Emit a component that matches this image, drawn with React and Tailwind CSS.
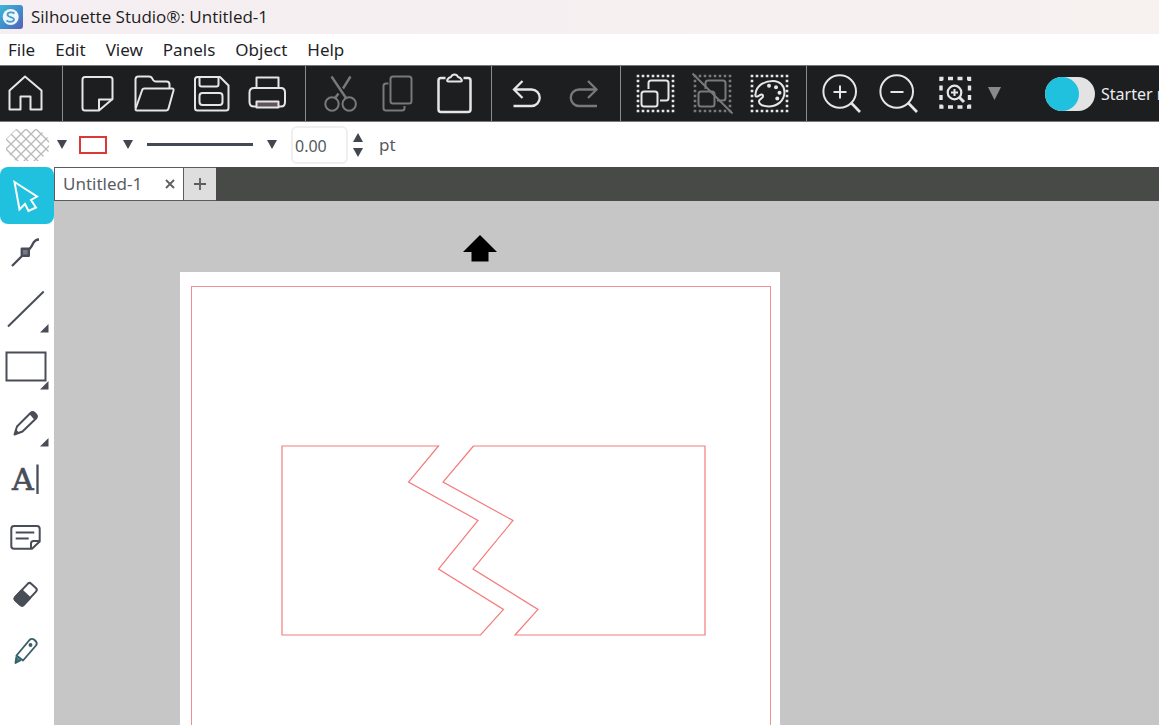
import React from "react";

const menus = ["File", "Edit", "View", "Panels", "Object", "Help"];

function ToolIcon({ children, dim }) {
  return (
    <svg
      viewBox="0 0 43 43"
      className={dim ? "size-[43px] text-[#77797a]" : "size-[43px] text-[#e6e6e6]"}
      fill="none"
      stroke="currentColor"
      strokeWidth="2"
      strokeLinejoin="round"
      aria-hidden="true"
    >
      {children}
    </svg>
  );
}

function ToolButton({ label, dim, children }) {
  return (
    <button type="button" aria-label={label} disabled={dim} className="flex h-full w-[57px] shrink-0 items-center justify-center">
      <ToolIcon dim={dim}>{children}</ToolIcon>
    </button>
  );
}

function ToolGroup({ children }) {
  return <div className="flex h-full shrink-0 border-l border-[#8b8c8d] pr-2 pl-[6px]">{children}</div>;
}

function DottedBox() {
  return <rect x="4" y="4" width="35" height="35" strokeWidth="2.6" strokeDasharray="2.6 2.4" strokeDashoffset="1.3" strokeLinejoin="miter" />;
}

function GroupShapes() {
  return (
    <>
      <rect x="7.5" y="19.5" width="16" height="15" rx="2.5" />
      <path d="M14.5 17V11Q14.5 8.5 17 8.5H32Q34.5 8.5 34.5 11V26Q34.5 28.5 32 28.5H26" />
    </>
  );
}

function Magnifier({ children }) {
  return (
    <>
      <circle cx="19.7" cy="19.5" r="16.3" />
      <path d="M31.3 31L40 40" strokeWidth="2.6" />
      {children}
    </>
  );
}

function Triangle({ className, up }) {
  return (
    <svg viewBox="0 0 10 9" preserveAspectRatio="none" className={className} fill="currentColor" aria-hidden="true">
      <path d={up ? "M5 0L10 9H0Z" : "M0 0H10L5 9Z"} />
    </svg>
  );
}

function TitleBar() {
  return (
    <header className="flex h-[34px] shrink-0 items-center gap-2 bg-gradient-to-r from-[#f5eef2] to-[#f7f1f0]">
      <svg viewBox="0 0 23 24" className="h-6 w-[23px]" aria-hidden="true">
        <defs>
          <linearGradient id="logo" x1="0" y1="0" x2="1" y2="1">
            <stop offset="0" stopColor="#3fb6d8" />
            <stop offset="0.5" stopColor="#3f8fcb" />
            <stop offset="1" stopColor="#5660b5" />
          </linearGradient>
        </defs>
        <path d="M0 0H20Q23 0 23 3V21Q23 24 20 24H0Z" fill="url(#logo)" />
        <circle cx="10.7" cy="12" r="8" fill="#eef7fc" />
        <path d="M14.5 8.5C12 6.5 7.5 7.2 7.5 9.7C7.5 12.6 14 11.5 14 14.6C14 17 9.5 17.6 6.5 15.4" fill="none" stroke="#4b9bd3" strokeWidth="1.8" />
      </svg>
      <h1 className="font-['Open_Sans','Noto_Sans',sans-serif] text-[17px] leading-6 whitespace-nowrap text-[#1c1c1c]">
        Silhouette Studio®: Untitled-1
      </h1>
    </header>
  );
}

function MenuBar() {
  return (
    <nav className="flex h-[31px] shrink-0 items-center gap-5 bg-white pl-2 text-[17px] leading-6 text-[#1f1f28]">
      {menus.map((m) => (
        <button key={m} type="button">
          {m}
        </button>
      ))}
    </nav>
  );
}

function Toolbar() {
  return (
    <div className="flex h-[57px] shrink-0 items-center overflow-hidden border-y border-[#77787a] bg-[#1d1e20]">
      <button type="button" aria-label="Home" className="mr-[11px] flex h-full w-[51px] shrink-0 items-center justify-center">
        <ToolIcon>
          <path d="M5.5 18.5L21 4.5L37.5 18.5V37.5H26.5V24.5H16.5V37.5H5.5Z" />
        </ToolIcon>
      </button>
      <ToolGroup>
        <ToolButton label="New">
          <path d="M9 5H34Q36.500 5 36.500 7.500V27L23 38.500H9Q6.500 38.500 6.500 36V7.500Q6.500 5 9 5Z" />
          <path d="M23 38.500V27.500H36.500" />
        </ToolButton>
        <ToolButton label="Open">
          <path d="M2.500 36V7.500Q2.500 4.500 5.500 4.500H16Q18.500 4.500 19.500 7Q20.500 9.500 23 9.500H33.500Q36.500 9.500 36.500 12.500V16" />
          <path d="M11.500 16.500H39Q41 16.500 40.500 18.500L35.500 36.500Q35 38.500 33 38.500H4Q2 38.500 2.700 36.500L9 18.500Q9.500 16.500 11.500 16.500Z" />
        </ToolButton>
        <ToolButton label="Save">
          <path d="M7.500 5H30L38.500 13.500V36Q38.500 38.500 36 38.500H7.500Q5 38.500 5 36V7.500Q5 5 7.500 5Z" />
          <path d="M9.500 5V12.500Q9.500 14.500 11.500 14.500H26.500Q28.500 14.500 28.500 12.500V5" />
          <rect x="9.500" y="21" width="23" height="12" rx="3" />
        </ToolButton>
        <ToolButton label="Print">
          <path d="M9.500 16V5.500H31.500V16" />
          <path d="M9.500 34.500H7Q2.500 34.500 2.500 30V20.500Q2.500 16 7 16H34Q38 16 38 20.500V30Q38 34.500 34 34.500H31.500" />
          <rect x="9.500" y="29.500" width="22" height="6" fill="#5d5558" />
        </ToolButton>
      </ToolGroup>
      <ToolGroup>
        <ToolButton label="Cut" dim>
          <circle cx="13" cy="32" r="6.700" />
          <circle cx="30.200" cy="32" r="6.700" />
          <path d="M12.500 4.500L27 26M31.500 4.500L24 16.500M19.500 21.500L16 26" strokeWidth="2.400" />
        </ToolButton>
        <ToolButton label="Copy" dim>
          <rect x="14.500" y="4.500" width="21" height="27" rx="2.500" />
          <path d="M12.500 11.500H10Q7.500 11.500 7.500 14V36Q7.500 38.500 10 38.500H26Q28.500 38.500 28.500 36V34" />
        </ToolButton>
        <ToolButton label="Paste">
          <path d="M12.500 6H8Q5.500 6 5.500 8.500V37.500Q5.500 40 8 40H35Q37.500 40 37.500 37.500V8.500Q37.500 6 35 6H30.500" strokeWidth="2.500" />
          <path d="M15.500 9.500Q13.500 9.500 14.500 7.500Q15.500 5.500 18 5Q19 2.500 21.500 2.500Q24 2.500 25 5Q27.500 5.500 28.500 7.500Q29.500 9.500 27.500 9.500Z" />
        </ToolButton>
      </ToolGroup>
      <ToolGroup>
        <ToolButton label="Undo">
          <path d="M17.500 9L9 17.500L17.500 26M9 17.500H26.500A8 8 0 0 1 26.500 34H8.500" strokeWidth="2.300" strokeLinejoin="miter" />
        </ToolButton>
        <ToolButton label="Redo" dim>
          <path d="M26 9L34.500 17.500L26 26M34.500 17.500H17A8 8 0 0 0 17 34H35" strokeWidth="2.300" strokeLinejoin="miter" />
        </ToolButton>
      </ToolGroup>
      <ToolGroup>
        <ToolButton label="Group">
          <DottedBox />
          <GroupShapes />
        </ToolButton>
        <ToolButton label="Ungroup" dim>
          <DottedBox />
          <GroupShapes />
          <path d="M1.500 1.500L41.500 41.500" />
        </ToolButton>
        <ToolButton label="Color palette">
          <DottedBox />
          <path d="M7.500 22.500C8 13 17 9 25 9C32 9 36.500 14 36.500 20C36.500 29 29 34.500 20.500 34.500C14.500 34.500 10.500 32 11 29C11.500 26.500 15.500 26.500 15 23.800C14.500 21.500 12.500 22.500 10.500 24C8.500 25 7 25 7.500 22.500Z" />
          <g fill="currentColor" stroke="none">
            <circle cx="21" cy="13.700" r="2" />
            <circle cx="28" cy="15.200" r="2" />
            <circle cx="31.500" cy="20.700" r="2" />
            <circle cx="29.300" cy="26.500" r="2" />
          </g>
        </ToolButton>
      </ToolGroup>
      <ToolGroup>
        <ToolButton label="Zoom in">
          <Magnifier>
            <path d="M13.500 20H26.500M20 13.500V26.500" />
          </Magnifier>
        </ToolButton>
        <ToolButton label="Zoom out">
          <Magnifier>
            <path d="M13.500 20H26.500" />
          </Magnifier>
        </ToolButton>
        <ToolButton label="Zoom selection">
          <rect x="7" y="6.500" width="28.500" height="28.500" strokeWidth="3.400" strokeDasharray="5 4.500" strokeDashoffset="2.500" strokeLinejoin="miter" />
          <circle cx="20.500" cy="20.500" r="6.800" strokeWidth="2.200" />
          <path d="M25.500 25.500L30 30" strokeWidth="3" />
          <path d="M17 20.500H24M20.500 17V24" />
        </ToolButton>
      </ToolGroup>
      <button type="button" aria-label="Zoom options" className="-ml-1 shrink-0 text-[#8a8a8a]">
        <Triangle className="h-[13px] w-[13px]" />
      </button>
      <label className="ml-11 flex shrink-0 items-center gap-[6px] text-[16px] leading-6 whitespace-nowrap text-[#ececec]">
        <span className="flex h-[34px] w-[50px] rounded-full bg-[#e3e3e3]">
          <input type="checkbox" role="switch" className="size-[34px] appearance-none rounded-full bg-[#20c1df]" />
        </span>
        Starter mode
      </label>
    </div>
  );
}

function StyleBar() {
  return (
    <div className="flex h-[45px] shrink-0 items-center bg-white text-[#41464f]">
      <button type="button" aria-label="Fill color" className="ml-[6px] flex items-center gap-2">
        <svg viewBox="0 0 43 32" className="h-8 w-[43px]" aria-hidden="true">
          <defs>
            <pattern id="hatch" width="10" height="10" patternUnits="userSpaceOnUse">
              <path d="M-1 -1L11 11M11 -1L-1 11" stroke="#b9b9b9" strokeWidth="1.300" />
            </pattern>
          </defs>
          <path d="M10 0H33L43 10V22L33 32H10L0 22V10Z" fill="url(#hatch)" />
        </svg>
        <Triangle className="h-[9px] w-[10px]" />
      </button>
      <button type="button" aria-label="Line color" className="ml-3 flex items-center gap-4">
        <span className="h-[18px] w-7 border-2 border-[#dc3838]" />
        <Triangle className="h-[9px] w-[10px]" />
      </button>
      <button type="button" aria-label="Line style" className="ml-[14px] flex items-center gap-[14px]">
        <span className="h-[3px] w-[106px] bg-[#434a55]" />
        <Triangle className="h-[9px] w-[10px]" />
      </button>
      <input
        type="text"
        aria-label="Line thickness"
        defaultValue="0.00"
        className="ml-[14px] h-[38px] w-[57px] rounded-md border-2 border-[#efefef] bg-white pt-[2px] pl-[2px] text-[16px] text-[#565a60] outline-none"
      />
      <div className="ml-[5px] flex flex-col gap-[6px]">
        <button type="button" aria-label="Increase">
          <Triangle up className="h-[9px] w-[10px]" />
        </button>
        <button type="button" aria-label="Decrease">
          <Triangle className="h-[9px] w-[10px]" />
        </button>
      </div>
      <span className="ml-4 text-[17px] leading-6 text-[#565a60]">pt</span>
    </div>
  );
}

function SideTool({ label, active, flyout, children }) {
  return (
    <button
      type="button"
      aria-label={label}
      className={active ? "h-[57px] rounded-lg bg-[#20c1df] text-white" : "h-[57px] text-[#494d57]"}
    >
      <svg viewBox="0 0 54 57" className="h-[57px] w-[54px]" fill="none" stroke="currentColor" strokeWidth="2" strokeLinejoin="round" aria-hidden="true">
        {children}
        {flyout && <path d="M48.500 43V51.500H40Z" fill="currentColor" stroke="none" />}
      </svg>
    </button>
  );
}

function SideBar() {
  return (
    <aside className="flex w-[54px] shrink-0 flex-col bg-white">
      <SideTool label="Select" active>
        <path d="M14.500 15L37 29.500L31 33L36 40.500L28.500 44L25 37L19.500 42.500Z" strokeLinejoin="miter" />
      </SideTool>
      <SideTool label="Edit points">
        <path d="M12 42L25 29C29 26 31 24 32.500 20.500C34 17 36 15.500 39 15.500" strokeWidth="2.300" />
        <rect x="21.800" y="24.800" width="7" height="7" strokeWidth="2.400" fill="#777a80" />
      </SideTool>
      <SideTool label="Line" flyout>
        <path d="M8 45.500L43.700 10.500" />
      </SideTool>
      <SideTool label="Rectangle" flyout>
        <rect x="6.500" y="14.500" width="39" height="28" strokeLinejoin="miter" />
      </SideTool>
      <SideTool label="Freehand" flyout>
        <path d="M14.500 39.500L17 31.500L30.500 18Q32.500 16.200 34.500 18L36 19.500Q37.800 21.500 36 23.500L22.500 36.500Z" />
        <path d="M29.500 19L32 16.800Q33.500 16 35 17.500L36.500 19.200Q38 21 36.800 22.500L34.500 25Z" fill="currentColor" stroke="none" />
        <path d="M14.500 39.500L16 34.500L19.500 38Z" fill="currentColor" stroke="none" />
      </SideTool>
      <SideTool label="Text">
        <text x="12" y="38" fill="currentColor" strokeWidth="0.700" fontSize="30" className="font-['DejaVu_Serif',serif]">
          A
        </text>
        <path d="M37.500 12.500V42" strokeWidth="2.300" />
      </SideTool>
      <SideTool label="Note">
        <path d="M14 17H37Q39.700 17 39.700 20V32.500L32 39.800H14Q11.300 39.800 11.300 37V20Q11.300 17 14 17Z" />
        <path d="M31 39.500V34.500Q31 32 33.500 32H39.500M15.700 23.500H34.300M15.700 29.500H28.700" />
      </SideTool>
      <SideTool label="Eraser">
        <g transform="rotate(-47 25.700 28.300)">
          <rect x="14.200" y="22.600" width="23" height="11.400" rx="2.500" />
          <path d="M26 22.600H16.700Q14.200 22.600 14.200 25.100V31.500Q14.200 34 16.700 34H26Z" fill="currentColor" />
        </g>
      </SideTool>
      <SideTool label="Knife">
        <g stroke="#3a5f6b" strokeWidth="1.900">
          <path d="M16.500 32.500L29.500 17Q31.500 15 34 16.500L36 18.500Q37.500 20.500 36 22.500L23 37.500Z" />
          <path d="M16.500 33.500L15.500 40L21 37" fill="#3a8590" />
          <circle cx="30.500" cy="22" r="1" fill="#3a5f6b" />
        </g>
      </SideTool>
    </aside>
  );
}

function TabStrip() {
  return (
    <div className="flex h-[34px] shrink-0 bg-[#484a48] text-[17px] leading-6 text-[#5a5d62]">
      <div className="flex w-[130px] items-center justify-between border border-[#5c5c5c] bg-white pr-2 pl-2">
        <button type="button">Untitled-1</button>
        <button type="button" aria-label="Close tab">
          <svg viewBox="0 0 10 10" className="size-[10px]" stroke="#5d5d5d" strokeWidth="1.800" aria-hidden="true">
            <path d="M1 1L9 9M9 1L1 9" />
          </svg>
        </button>
      </div>
      <button type="button" aria-label="New tab" className="flex w-8 items-center justify-center border-y border-[#5c5c5c] bg-[#dedede]">
        <svg viewBox="0 0 12 12" className="size-3" stroke="#5d5d5d" strokeWidth="1.800" aria-hidden="true">
          <path d="M6 0V12M0 6H12" />
        </svg>
      </button>
    </div>
  );
}

function Canvas() {
  return (
    <main className="flex min-h-0 flex-1 flex-col bg-[#c6c6c6] pt-[34px] pl-[126px]">
      <div className="flex min-h-0 w-[600px] flex-1 flex-col items-center gap-[10px]">
        <svg viewBox="0 0 34 27" className="h-[27px] w-[34px] shrink-0" aria-hidden="true">
          <path d="M17 0L34 17H25.500V26.500H8.500V17H0Z" />
        </svg>
        <div className="min-h-0 w-full flex-1 overflow-hidden bg-white pt-[14px] pr-[9px] pl-[11px]">
          <div className="h-full border border-b-0 border-[#f08f8f]">
            <svg viewBox="0 0 578 438" className="h-[438px] w-[578px]" fill="none" stroke="#f47c7c" strokeWidth="1.200" role="img" aria-label="Split rectangle">
              <path d="M90 159H246.500L216.500 195L286 233.500L246.500 282L311.500 322.500L288.500 348H90Z" />
              <path d="M281.500 159L251 195L321 233.500L281 282L346 322.500L323 348H513V159Z" />
            </svg>
          </div>
        </div>
      </div>
    </main>
  );
}

export default function App() {
  return (
    <div className="flex h-screen flex-col overflow-hidden bg-white font-['Noto_Sans','Open_Sans',sans-serif]">
      <TitleBar />
      <MenuBar />
      <Toolbar />
      <StyleBar />
      <div className="flex min-h-0 flex-1">
        <SideBar />
        <div className="flex min-w-0 flex-1 flex-col">
          <TabStrip />
          <Canvas />
        </div>
      </div>
    </div>
  );
}
